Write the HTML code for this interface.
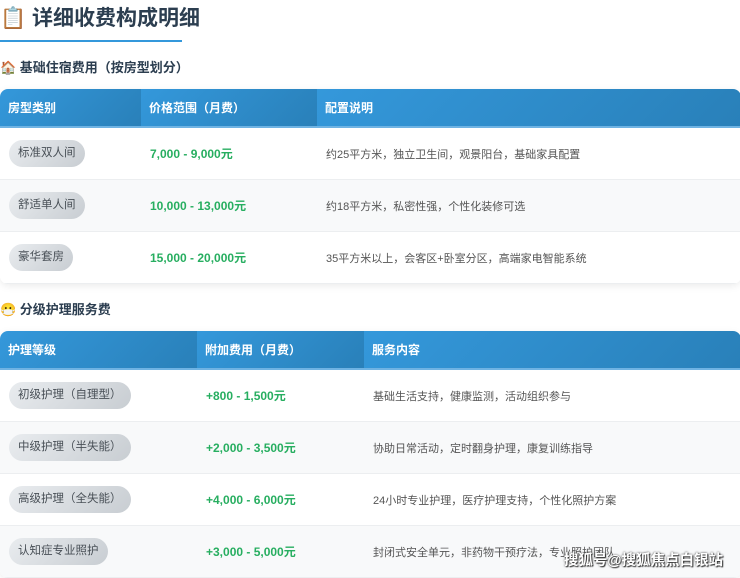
<!DOCTYPE html>
<html><head><meta charset="utf-8"><style>
*{margin:0;padding:0;box-sizing:border-box}
body{width:740px;height:578px;overflow:hidden;background:#fff;font-family:"Liberation Sans","Noto Sans CJK SC",sans-serif;color:#2c3e50;position:relative}
h1{position:absolute;left:0;top:4px;font-size:21px;font-weight:bold;line-height:30px;color:#2c3e50;width:182px;border-bottom:2px solid #3498db;height:38px;white-space:nowrap}
h3{position:absolute;left:0;font-size:13px;font-weight:bold;color:#2c3e50;white-space:nowrap}
table{position:absolute;left:0;width:741px;border-collapse:separate;border-spacing:0;border-radius:8px;overflow:hidden;box-shadow:0 2px 8px rgba(0,0,0,.08)}
th{height:39px;text-align:left;padding-left:8px;color:#fff;font-size:12px;font-weight:bold;background:linear-gradient(135deg,#3498db,#2980b9);border-bottom:2px solid #6fb3e3}
td{padding-left:9px;font-size:11px;color:#555;border-bottom:1px solid #eceef0;height:52px}
tr:nth-child(odd) td{background:#f8f9fa}
tr:nth-child(even) td{background:#fff}
.p{display:inline-block;padding:0 9px;height:27px;line-height:27px;border-radius:14px;background:linear-gradient(135deg,#e9ecef,#c8cdd2);color:#495057;font-size:11.5px}
.g{color:#27ae60;font-weight:bold;font-size:12px}
.wm{position:absolute;right:17px;bottom:8px;color:#fff;font-size:14.5px;font-weight:bold;text-shadow:0 0 2px #333,1px 1px 1px #333}
</style></head><body>
<h1>📋 详细收费构成明细</h1>
<h3 style="top:57px">🏠 基础住宿费用（按房型划分）</h3>
<table style="top:89px">
<tr><th style="width:141px">房型类别</th><th style="width:176px">价格范围（月费）</th><th>配置说明</th></tr>
<tr><td><span class="p">标准双人间</span></td><td class="g">7,000 - 9,000元</td><td>约25平方米，独立卫生间，观景阳台，基础家具配置</td></tr>
<tr><td><span class="p">舒适单人间</span></td><td class="g">10,000 - 13,000元</td><td>约18平方米，私密性强，个性化装修可选</td></tr>
<tr><td><span class="p">豪华套房</span></td><td class="g">15,000 - 20,000元</td><td>35平方米以上，会客区+卧室分区，高端家电智能系统</td></tr>
</table>
<h3 style="top:299px">😷 分级护理服务费</h3>
<table style="top:331px">
<tr><th style="width:197px">护理等级</th><th style="width:167px">附加费用（月费）</th><th>服务内容</th></tr>
<tr><td><span class="p">初级护理（自理型）</span></td><td class="g">+800 - 1,500元</td><td>基础生活支持，健康监测，活动组织参与</td></tr>
<tr><td><span class="p">中级护理（半失能）</span></td><td class="g">+2,000 - 3,500元</td><td>协助日常活动，定时翻身护理，康复训练指导</td></tr>
<tr><td><span class="p">高级护理（全失能）</span></td><td class="g">+4,000 - 6,000元</td><td>24小时专业护理，医疗护理支持，个性化照护方案</td></tr>
<tr><td><span class="p">认知症专业照护</span></td><td class="g">+3,000 - 5,000元</td><td>封闭式安全单元，非药物干预疗法，专业照护团队</td></tr>
</table>
<div class="wm">搜狐号@搜狐焦点白银站</div>
</body></html>
